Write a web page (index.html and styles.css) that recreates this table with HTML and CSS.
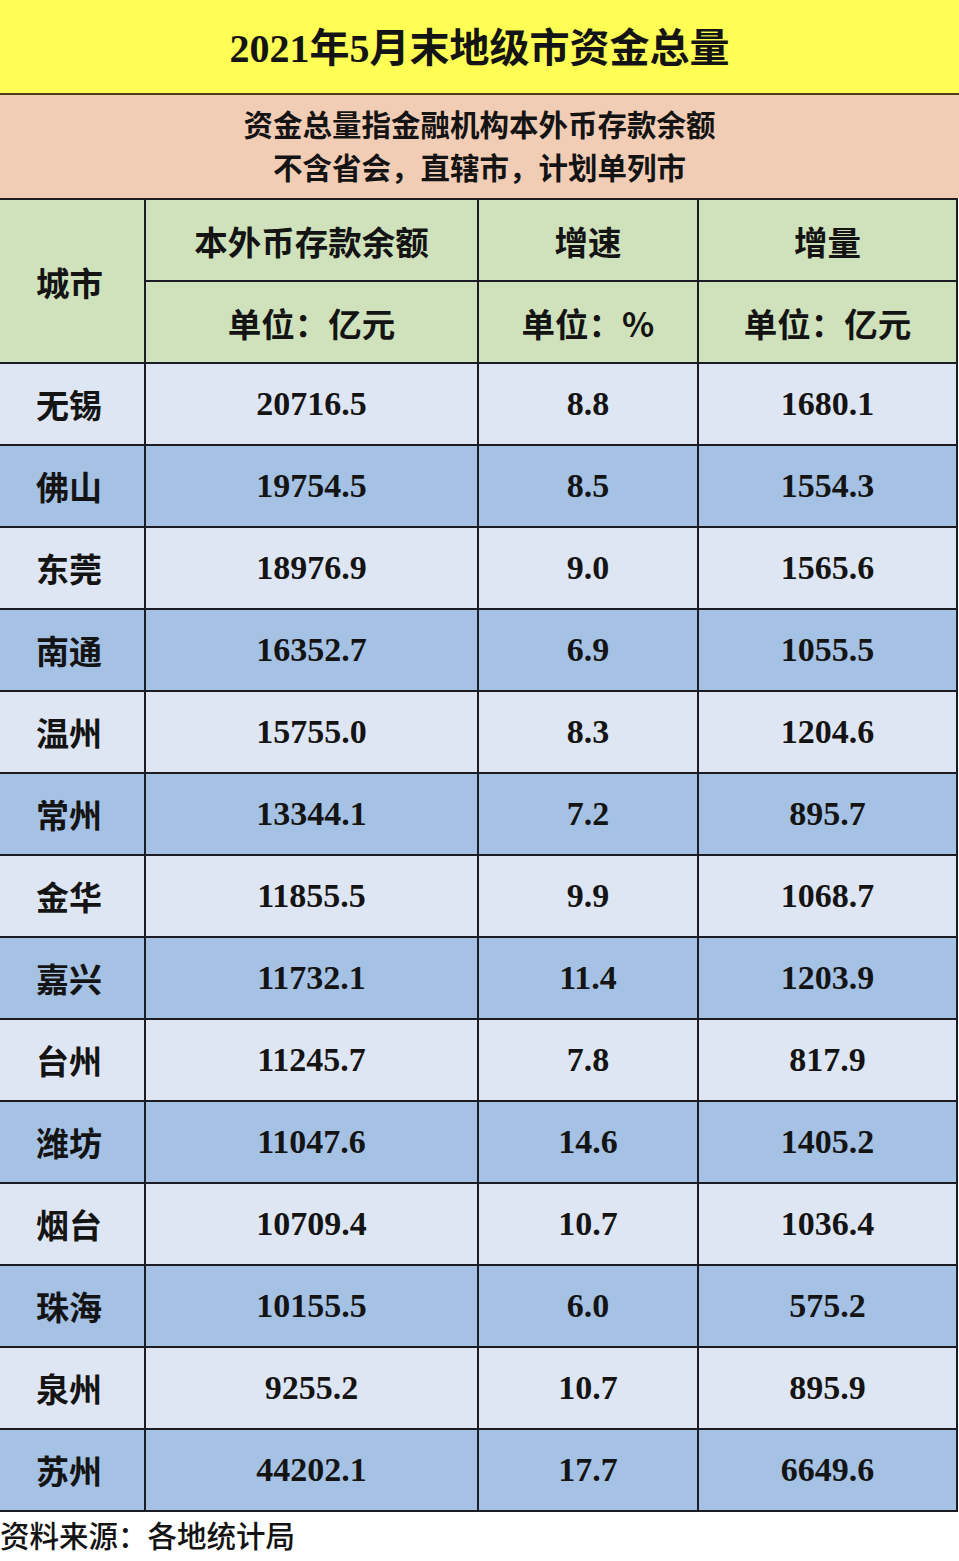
FILE: index.html
```html
<!DOCTYPE html>
<html lang="zh-CN">
<head>
<meta charset="utf-8">
<title>2021年5月末地级市资金总量</title>
<link rel="stylesheet" href="styles.css">
</head>
<body>
<div class="sheet">
  <div class="title">2021年5月末地级市资金总量</div>
  <div class="note">
    <div>资金总量指金融机构本外币存款余额</div>
    <div>不含省会，直辖市，计划单列市</div>
  </div>
  <table class="data">
    <colgroup>
      <col class="c-city"><col class="c-bal"><col class="c-rate"><col class="c-inc">
    </colgroup>
    <thead>
      <tr class="head">
        <th rowspan="2" class="city-h">城市</th>
        <th>本外币存款余额</th>
        <th>增速</th>
        <th>增量</th>
      </tr>
      <tr class="head">
        <th>单位：亿元</th>
        <th>单位：%</th>
        <th>单位：亿元</th>
      </tr>
    </thead>
    <tbody>
      <tr class="light"><td class="city">无锡</td><td>20716.5</td><td>8.8</td><td>1680.1</td></tr>
      <tr class="dark"><td class="city">佛山</td><td>19754.5</td><td>8.5</td><td>1554.3</td></tr>
      <tr class="light"><td class="city">东莞</td><td>18976.9</td><td>9.0</td><td>1565.6</td></tr>
      <tr class="dark"><td class="city">南通</td><td>16352.7</td><td>6.9</td><td>1055.5</td></tr>
      <tr class="light"><td class="city">温州</td><td>15755.0</td><td>8.3</td><td>1204.6</td></tr>
      <tr class="dark"><td class="city">常州</td><td>13344.1</td><td>7.2</td><td>895.7</td></tr>
      <tr class="light"><td class="city">金华</td><td>11855.5</td><td>9.9</td><td>1068.7</td></tr>
      <tr class="dark"><td class="city">嘉兴</td><td>11732.1</td><td>11.4</td><td>1203.9</td></tr>
      <tr class="light"><td class="city">台州</td><td>11245.7</td><td>7.8</td><td>817.9</td></tr>
      <tr class="dark"><td class="city">潍坊</td><td>11047.6</td><td>14.6</td><td>1405.2</td></tr>
      <tr class="light"><td class="city">烟台</td><td>10709.4</td><td>10.7</td><td>1036.4</td></tr>
      <tr class="dark"><td class="city">珠海</td><td>10155.5</td><td>6.0</td><td>575.2</td></tr>
      <tr class="light"><td class="city">泉州</td><td>9255.2</td><td>10.7</td><td>895.9</td></tr>
      <tr class="dark"><td class="city">苏州</td><td>44202.1</td><td>17.7</td><td>6649.6</td></tr>
    </tbody>
  </table>
  <div class="source">资料来源：各地统计局</div>
</div>
</body>
</html>
```
FILE: styles.css
```css
html, body {
  margin: 0;
  padding: 0;
  background: #ffffff;
}
.sheet {
  width: 959px;
  color: #141414;
  font-family: "Liberation Serif", "Noto Sans CJK SC", sans-serif;
}
.title {
  height: 95px;
  background: #fefe55;
  border-bottom: 2px solid #4e3f22;
  display: flex;
  align-items: center;
  justify-content: center;
  font-size: 40px;
  font-weight: 700;
  padding-bottom: 4px;
  box-sizing: border-box;
}
.note {
  height: 103px;
  background: #f2cdb6;
  display: flex;
  flex-direction: column;
  justify-content: center;
  align-items: center;
  font-family: "Noto Sans CJK SC", sans-serif;
  font-size: 29.5px;
  font-weight: 700;
  line-height: 43px;
  padding-bottom: 4px;
  box-sizing: border-box;
}
.data {
  width: 957px;
  border-collapse: collapse;
  table-layout: fixed;
}
.c-city { width: 145px; }
.c-bal { width: 333px; }
.c-rate { width: 220px; }
.c-inc { width: 259px; }
.data th, .data td {
  height: 80px;
  padding: 0;
  border: 2px solid #1c1c24;
  text-align: center;
  vertical-align: middle;
}
.data tr > :first-child { border-left: none; }
.data th {
  background: #cfe2bb;
  font-family: "Noto Sans CJK SC", sans-serif;
  font-size: 33.5px;
  font-weight: 700;
}
.data th.city-h {
  text-align: left;
  padding-left: 36px;
}
.data td {
  font-size: 34px;
  font-weight: 700;
}
.data td.city {
  text-align: left;
  padding-left: 36px;
  font-family: "Noto Sans CJK SC", sans-serif;
  font-size: 33px;
  font-weight: 700;
}
.light td { background: #dfe6f3; }
.dark td { background: #a5c2e5; }
.source {
  font-family: "Noto Sans CJK SC", sans-serif;
  font-size: 29.5px;
  font-weight: 500;
  line-height: 44px;
}
```
